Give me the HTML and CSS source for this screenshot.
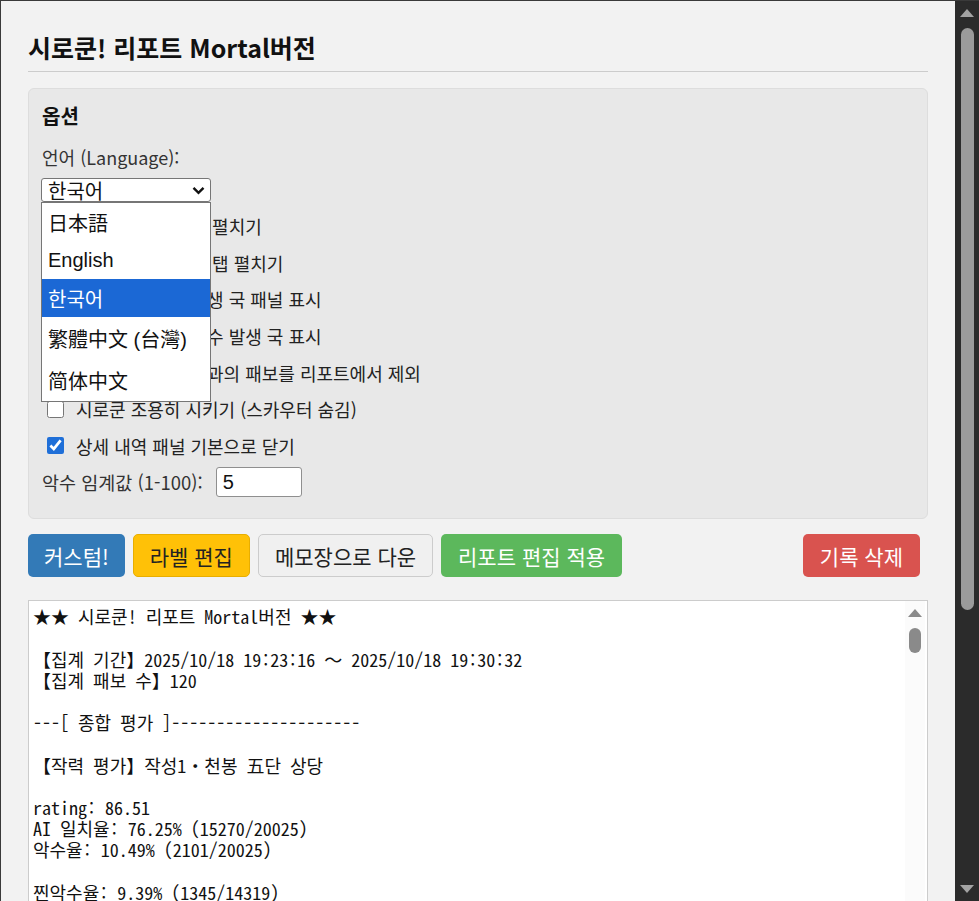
FILE: index.html
```html
<!DOCTYPE html>
<html lang="ko">

<head>
    <meta charset="UTF-8">
    <meta name="viewport" content="width=device-width, initial-scale=1.0">
    <title>시로쿤! 리포트 Mortal버전</title>
    <link rel="stylesheet" href="styles.css">
</head>

<body>
    <div class="window">
        <main class="page">
            <h1 class="title">시로쿤! 리포트 Mortal버전</h1>

            <section class="options">
                <h2>옵션</h2>
                <label class="field-label" for="lang">언어 (Language):</label>
                <div class="lang-picker">
                    <div class="select" id="lang">
                        <span>한국어</span>
                        <svg class="chevron" width="13" height="9" viewBox="0 0 13 9">
                            <path d="M1.5 1.8 L6.5 6.8 L11.5 1.8" fill="none" stroke="#111" stroke-width="2.4" />
                        </svg>
                    </div>
                    <!-- open option list -->
                    <ul class="lang-menu">
                        <li lang="ja">日本語</li>
                        <li lang="en">English</li>
                        <li class="selected">한국어</li>
                        <li class="tall" lang="zh-TW">繁體中文 (台灣)</li>
                        <li class="tall" lang="zh-CN">简体中文</li>
                    </ul>
                </div>

                <label class="check-row first"><input type="checkbox" checked>모든 국 상세 내역 펼치기</label>
                <label class="check-row"><input type="checkbox">각 국별 분석 결과 탭 펼치기</label>
                <label class="check-row"><input type="checkbox" checked>하단에 큰 악수 발생 국 패널 표시</label>
                <label class="check-row"><input type="checkbox">리포트 본문 속 악수 발생 국 표시</label>
                <label class="check-row"><input type="checkbox">기준 미달 대국 결과의 패보를 리포트에서 제외</label>
                <label class="check-row"><input type="checkbox">시로쿤 조용히 시키기 (스카우터 숨김)</label>
                <label class="check-row"><input type="checkbox" checked>상세 내역 패널 기본으로 닫기</label>

                <div class="threshold-row">
                    <label for="threshold">악수 임계값 (1-100):</label>
                    <input type="text" id="threshold" value="5">
                </div>
            </section>

            <div class="actions">
                <button class="btn btn-blue">커스텀!</button>
                <button class="btn btn-yellow">라벨 편집</button>
                <button class="btn btn-plain">메모장으로 다운</button>
                <button class="btn btn-green">리포트 편집 적용</button>
                <button class="btn btn-red push-right">기록 삭제</button>
            </div>

            <div class="report">
<pre class="report-text">★★ 시로쿤! 리포트 Mortal버전 ★★

【집계 기간】2025/10/18 19:23:16 ～ 2025/10/18 19:30:32
【집계 패보 수】120

---[ 종합 평가 ]---------------------

【작력 평가】작성1・천봉 五단 상당

rating: 86.51
AI 일치율: 76.25% (15270/20025)
악수율: 10.49% (2101/20025)

찐악수율: 9.39% (1345/14319)
</pre>
                <div class="report-scroll">
                    <span class="arrow-up small"></span>
                    <span class="thumb small"></span>
                </div>
            </div>
        </main>

        <div class="page-scroll">
            <span class="arrow-up"></span>
            <span class="thumb"></span>
            <span class="arrow-down"></span>
        </div>
    </div>
</body>

</html>
```

FILE: styles.css
```css
body {
    margin: 0;
    height: 901px;
    overflow: hidden;
    background-color: #f2f2f2;
    font-family: "Noto Sans CJK KR", "Noto Sans", sans-serif;
    color: #222;
}

.window {
    display: flex;
    height: 901px;
    box-sizing: border-box;
    border-top: 1px solid #3a3a3a;
    border-left: 1px solid #3a3a3a;
}

.page {
    flex: 1;
    min-width: 0;
    padding: 31px 27px 0 27px;
    overflow: hidden;
}

.title {
    margin: 0;
    padding-bottom: 9px;
    border-bottom: 1px solid #ccc;
    font-size: 25px;
    line-height: 30px;
    font-weight: 700;
    color: #111;
}

/* options panel */
.options {
    margin-top: 16px;
    padding: 14px 13px 21px;
    background-color: #e8e8e8;
    border: 1px solid #ddd;
    border-radius: 6px;
}

.options h2 {
    margin: 0 0 16px;
    font-size: 20px;
    line-height: 26px;
    font-weight: 700;
    color: #111;
}

.field-label {
    display: block;
    font-size: 18px;
    line-height: 24px;
    color: #333;
}

.lang-picker {
    position: relative;
    width: 170px;
    margin-top: 9px;
    margin-left: -1px;
}

.select {
    display: flex;
    align-items: center;
    justify-content: space-between;
    height: 24px;
    box-sizing: border-box;
    padding: 0 5px 0 6px;
    background-color: #fff;
    border: 1px solid #767676;
    border-radius: 3px;
    font-family: "Liberation Sans", "Noto Sans CJK KR", sans-serif;
    font-size: 20px;
    color: #111;
}

.lang-menu {
    position: absolute;
    top: 24px;
    left: 0;
    z-index: 5;
    width: 170px;
    box-sizing: border-box;
    margin: 0;
    padding: 0;
    list-style: none;
    background-color: #fff;
    border: 1px solid #767676;
}

.lang-menu li {
    display: flex;
    align-items: center;
    height: 38px;
    padding-left: 6px;
    font-family: "Liberation Sans", "Noto Sans CJK KR", sans-serif;
    font-size: 20px;
    color: #111;
}

.lang-menu li[lang="ja"] {
    font-family: "Noto Sans CJK JP", sans-serif;
}

.lang-menu li[lang="zh-TW"] {
    font-family: "Liberation Sans", "Noto Sans CJK TC", sans-serif;
}

.lang-menu li[lang="zh-CN"] {
    font-family: "Noto Sans CJK SC", sans-serif;
}

.lang-menu li.tall {
    height: 42px;
}

.lang-menu li.selected {
    background-color: #1b68d5;
    color: #fff;
}

.check-row {
    display: flex;
    align-items: center;
    height: 36.6px;
    font-size: 18px;
    color: #222;
}

.check-row.first {
    margin-top: 6px;
}

.check-row input {
    width: 17px;
    height: 17px;
    margin: 0 12px 0 5px;
    accent-color: #1f6fd8;
}

.threshold-row {
    display: flex;
    align-items: center;
    gap: 13px;
    height: 30px;
    margin-top: 3px;
    font-size: 18.5px;
    color: #333;
}

.threshold-row input {
    width: 86px;
    height: 30px;
    box-sizing: border-box;
    padding: 0 6px;
    border: 1px solid #8f8f8f;
    border-radius: 3px;
    font-family: "Liberation Sans", sans-serif;
    font-size: 20px;
    color: #111;
}

/* buttons */
.actions {
    display: flex;
    gap: 8px;
    margin-top: 15px;
    padding-right: 8px;
}

.btn {
    height: 43px;
    padding: 0 16px;
    border: 1px solid transparent;
    border-radius: 5px;
    font-family: inherit;
    font-size: 21px;
}

.btn-blue {
    padding: 0 15px;
    background-color: #337ab7;
    color: #fff;
}

.btn-yellow {
    background-color: #ffc107;
    border-color: #e8ae00;
    color: #222;
}

.btn-plain {
    background-color: #f0f0f0;
    border-color: #ccc;
    color: #222;
}

.btn-green {
    background-color: #5cb85c;
    color: #fff;
}

.btn-red {
    background-color: #d9534f;
    color: #fff;
}

.push-right {
    margin-left: auto;
}

/* report box */
.report {
    display: flex;
    height: 360px;
    margin-top: 23px;
    background-color: #fff;
    border: 1px solid #ccc;
}

.report-text {
    flex: 1;
    margin: 0;
    padding: 5px 4px;
    font-family: "Noto Sans Mono CJK KR", "Liberation Mono", monospace;
    font-size: 18px;
    line-height: 21.2px;
    color: #111;
    white-space: pre;
    overflow: hidden;
}

.report-scroll {
    display: flex;
    flex-direction: column;
    align-items: center;
    width: 20px;
    margin-right: 2px;
    padding-top: 8px;
    background-color: #fbfbfb;
}

.page-scroll {
    display: flex;
    flex-direction: column;
    align-items: center;
    width: 24px;
    flex-shrink: 0;
    box-sizing: border-box;
    padding: 8px 0 8px;
    background-color: #2b2b2b;
}

.arrow-up,
.arrow-down {
    width: 0;
    height: 0;
    border-left: 7.5px solid transparent;
    border-right: 7.5px solid transparent;
}

.arrow-up {
    border-bottom: 8px solid #a3a3a3;
}

.arrow-down {
    margin-top: auto;
    border-top: 8px solid #a3a3a3;
}

.thumb {
    width: 13px;
    height: 582px;
    margin-top: 11px;
    border-radius: 6.5px;
    background-color: #9b9b9b;
}

.arrow-up.small {
    border-left-width: 7px;
    border-right-width: 7px;
    border-bottom-color: #8a8a8a;
}

.thumb.small {
    width: 12px;
    height: 25px;
    border-radius: 6px;
    background-color: #8a8a8a;
}
```
